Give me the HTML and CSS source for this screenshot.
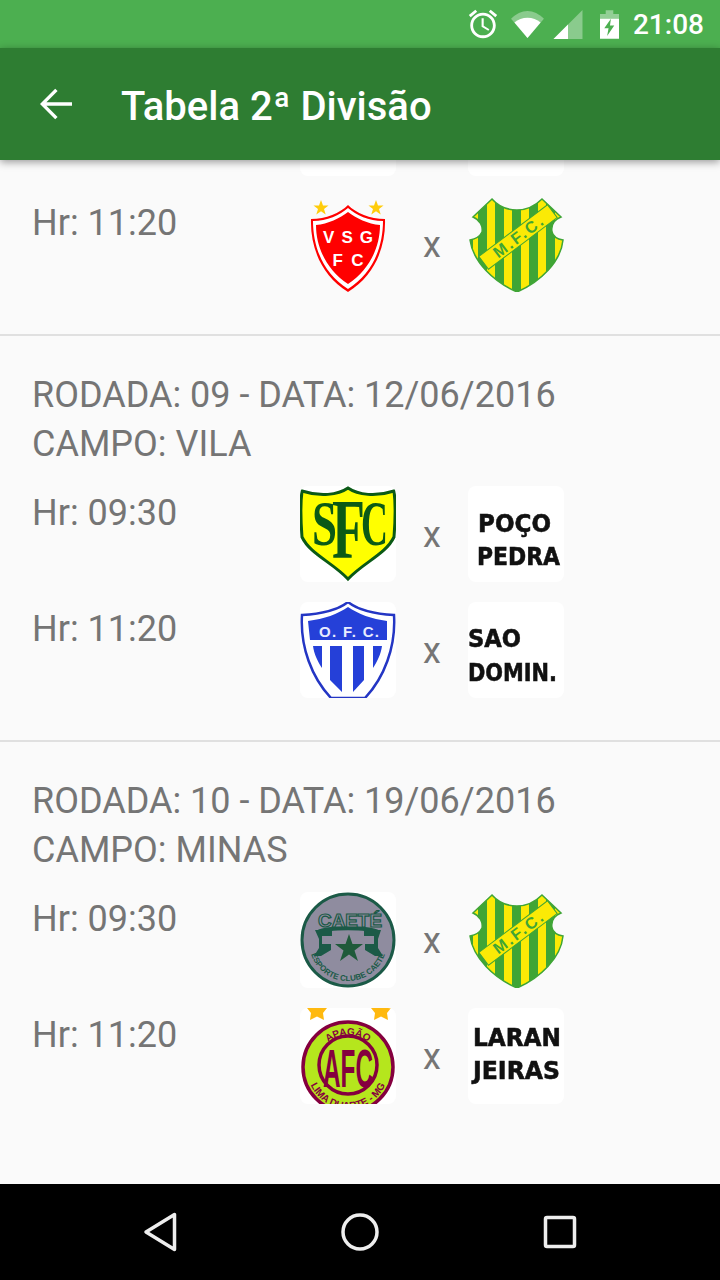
FILE: index.html
```html
<!DOCTYPE html>
<html lang="pt-br">
<head>
    <meta charset="UTF-8">
    <meta name="viewport" content="width=device-width, initial-scale=1.0">
    <title>Tabela 2ª Divisão</title>
    <link rel="stylesheet" href="styles.css">
</head>
<body>
    <svg class="defs" width="0" height="0">
        <defs>
            <clipPath id="mfcClip">
                <path d="M24 3 C31 11 41 14 49 14 C57 14 66 11 74 3 L93 21 C85 24 83 30 84 36 C85 40 89 43 95 44 C93 66 72 86 49 96 C26 86 5 66 2 44 C8 43 12 40 14 36 C15 30 12 24 5 21 Z"/>
            </clipPath>
            <symbol id="mfc" viewBox="0 0 96 96">
                <g clip-path="url(#mfcClip)">
                    <rect width="96" height="96" fill="#3fa535"/>
                    <path fill="#fbea06" d="M5 0h5v96H5zM19 0h8v96h-8zM36 0h8v96h-8zM53 0h8v96h-8zM70 0h8v96h-8zM87 0h8v96h-8z"/>
                </g>
                <path fill="none" stroke="#3fa535" stroke-width="1.500" d="M24 3 C31 11 41 14 49 14 C57 14 66 11 74 3 L93 21 C85 24 83 30 84 36 C85 40 89 43 95 44 C93 66 72 86 49 96 C26 86 5 66 2 44 C8 43 12 40 14 36 C15 30 12 24 5 21 Z"/>
                <g transform="rotate(-37 50 41)">
                    <rect x="7" y="33" width="86" height="16" fill="#fbea06" stroke="#3fa535" stroke-width="1"/>
                    <text class="crest-text" x="50" y="46.500" text-anchor="middle" font-size="16" fill="#3fa535" textLength="58" lengthAdjust="spacing">M.F.C.</text>
                </g>
            </symbol>
        </defs>
    </svg>

    <div class="tela">
        <div class="status-bar">
            <svg class="ic-alarme" viewBox="0 0 24 24"><path fill="#fff" d="M22 5.72l-4.6-3.86-1.29 1.53 4.6 3.86L22 5.72zM7.88 3.39L6.6 1.86 2 5.71l1.29 1.53 4.59-3.85zM12.5 8H11v6l4.75 2.85.75-1.23-4-2.37V8zM12 4c-4.97 0-9 4.03-9 9s4.03 9 9 9 9-4.03 9-9-4.03-9-9-9zm0 16c-3.87 0-7-3.13-7-7s3.13-7 7-7 7 3.13 7 7-3.13 7-7 7z"/></svg>
            <svg class="ic-wifi" viewBox="0 0 34 30">
                <path fill="#fff" fill-opacity=".35" d="M0 9 C5 4 11 1 17 1 C23 1 29 4 34 9 L17 29 Z"/>
                <path fill="#fff" d="M3.500 13 C7 9.500 12 8 17 8 C22 8 27 9.500 30.500 13 L17 29 Z"/>
            </svg>
            <svg class="ic-sinal" viewBox="0 0 30 30">
                <path fill="#fff" fill-opacity=".35" d="M0 30 L30 0 V30 Z"/>
                <path fill="#fff" d="M0 30 L15 15 V30 Z"/>
            </svg>
            <svg class="ic-bateria" viewBox="0 0 20 30">
                <path fill="#fff" fill-opacity=".4" d="M6 0h8v4h6v8H0V4h6z"/>
                <path fill="#fff" d="M0 9h20v21H0z"/>
                <path fill="#4caf50" d="M11.500 9 L4.500 19 H9 L7.500 27 L15 16 H10.500 Z"/>
            </svg>
            <span class="hora">21:08</span>
        </div>

        <header class="app-bar">
            <svg class="ic-voltar" viewBox="0 0 24 24"><path fill="#fff" d="M20 11.150H7.200l5.600-5.600L11.600 4.400 4 12l7.600 7.600 1.200-1.150-5.600-5.600H20z"/></svg>
            <h1 class="titulo">Tabela 2ª Divisão</h1>
        </header>

        <main class="conteudo">
            <div class="lista">
                <section class="rodada sem-cabecalho">
                    <div class="jogo">
                        <span class="hora-jogo"></span>
                        <div class="escudo branco"></div>
                        <span class="versus"></span>
                        <div class="escudo branco"></div>
                    </div>
                    <div class="jogo">
                        <span class="hora-jogo">Hr: 11:20</span>
                        <div class="escudo">
                            <svg viewBox="0 0 96 96">
                                <path fill="#ffcc0a" d="M21 4l2 5.500h5.500l-4.500 3.500 1.700 5.500-4.700-3.300-4.700 3.300 1.700-5.500-4.500-3.500H19zM76 4l2 5.500h5.500l-4.500 3.500 1.700 5.500-4.700-3.300-4.700 3.300 1.700-5.500-4.500-3.500H74z"/>
                                <path fill="#f00" d="M48 9 C56 17 70 23 85 23 C86 52 74 80 48 96 C22 80 10 52 11 23 C26 23 40 17 48 9 Z"/>
                                <path fill="#fff" d="M48 12 C56 19 69 25 83 25 C83 52 72 78 48 93 C24 78 13 52 13 25 C27 25 40 19 48 12 Z"/>
                                <path fill="#f00" d="M48 16 C56 22 68 28 80 29 C80 52 69 74 48 88 C27 74 16 52 16 29 C28 28 40 22 48 16 Z"/>
                                <text class="crest-text" x="48" y="47" text-anchor="middle" font-size="17" fill="#fff" textLength="50" lengthAdjust="spacing">VSG</text>
                                <text class="crest-text" x="48" y="70" text-anchor="middle" font-size="17" fill="#fff" textLength="31" lengthAdjust="spacing">FC</text>
                            </svg>
                        </div>
                        <span class="versus">x</span>
                        <div class="escudo"><svg viewBox="0 0 96 96"><use href="#mfc"/></svg></div>
                    </div>
                </section>

                <section class="rodada">
                    <p class="cabecalho">RODADA: 09 - DATA: 12/06/2016<br>CAMPO: VILA</p>
                    <div class="jogo">
                        <span class="hora-jogo">Hr: 09:30</span>
                        <div class="escudo branco">
                            <svg viewBox="0 0 96 96">
                                <path fill="#ff0" stroke="#0b5a16" stroke-width="3" d="M48 2 C58 9 76 11 94 5 C96 20 95 38 94 51 C86 68 64 76 48 93 C32 76 10 68 2 51 C1 38 0 20 2 5 C20 11 38 9 48 2 Z"/>
                                <text class="letra-serif" x="12" y="59" font-size="64" textLength="25" lengthAdjust="spacingAndGlyphs">S</text>
                                <text class="letra-serif" x="32" y="72" font-size="84" textLength="33" lengthAdjust="spacingAndGlyphs">F</text>
                                <text class="letra-serif" x="61" y="59" font-size="64" textLength="27" lengthAdjust="spacingAndGlyphs">C</text>
                            </svg>
                        </div>
                        <span class="versus">x</span>
                        <div class="escudo branco">
                            <svg class="borrado" viewBox="0 0 96 96">
                                <text class="nome-time" x="10" y="46" font-size="25" textLength="73" lengthAdjust="spacingAndGlyphs">POÇO</text>
                                <text class="nome-time" x="9" y="79" font-size="25" textLength="83" lengthAdjust="spacingAndGlyphs">PEDRA</text>
                            </svg>
                        </div>
                    </div>
                    <div class="jogo">
                        <span class="hora-jogo">Hr: 11:20</span>
                        <div class="escudo branco">
                            <svg viewBox="0 0 96 96">
                                <path fill="#fff" stroke="#2436c4" stroke-width="2.500" d="M48 0 C58 8 76 12 94 13 C96 45 84 76 65 96 H31 C12 76 0 45 2 13 C20 12 38 8 48 0 Z"/>
                                <path fill="#2540d8" d="M48 5 C58 12 72 17 87 19 V38 H10 L8 19 C24 17 38 12 48 5 Z"/>
                                <path fill="#2540d8" d="M13 44H22V66 C18 60 14 52 13 44ZM30 44H42V90 L30 78ZM53 44H64V78 L53 90ZM73 44H82 C81 52 77 60 73 66Z"/>
                                <text class="crest-text" x="49" y="35" text-anchor="middle" font-size="15" fill="#e8ecff" textLength="60" lengthAdjust="spacing">O. F. C.</text>
                            </svg>
                        </div>
                        <span class="versus">x</span>
                        <div class="escudo branco">
                            <svg class="borrado" viewBox="0 0 96 96">
                                <text class="nome-time" x="0" y="45" font-size="25" textLength="53" lengthAdjust="spacingAndGlyphs">SAO</text>
                                <text class="nome-time" x="0" y="79" font-size="25" textLength="89" lengthAdjust="spacingAndGlyphs">DOMIN.</text>
                            </svg>
                        </div>
                    </div>
                </section>

                <section class="rodada">
                    <p class="cabecalho">RODADA: 10 - DATA: 19/06/2016<br>CAMPO: MINAS</p>
                    <div class="jogo">
                        <span class="hora-jogo">Hr: 09:30</span>
                        <div class="escudo branco">
                            <svg viewBox="0 0 96 96">
                                <defs><path id="arcoCaete" d="M9 50 A39 39 0 0 0 87 50"/></defs>
                                <circle cx="48" cy="48" r="46" fill="#8f8c9f" stroke="#1b5a47" stroke-width="3"/>
                                <path fill="none" stroke="#1b5a47" stroke-width="4" d="M18 40 C28 35 68 35 78 40"/>
                                <path fill="#1b5a47" d="M15 38h17v6H22v8h9v6l-10 6H14l5-8v-9zM64 38h17l-3 9v9l5 8H75l-10-6v-6h9v-8H64z"/>
                                <path fill="#1f5a3a" d="M49 42l3.500 10h10.500l-8.500 6.500 3.500 10.500-9-6.500-9 6.500 3.500-10.500-8.500-6.500h10.500z"/>
                                <text class="crest-text caete" x="50" y="35" text-anchor="middle" font-size="19" textLength="64" lengthAdjust="spacingAndGlyphs">CAETÉ</text>
                                <text class="crest-text" font-size="8" fill="#1b5a47"><textPath href="#arcoCaete" startOffset="50%" text-anchor="middle">ESPORTE CLUBE CAETÉ</textPath></text>
                            </svg>
                        </div>
                        <span class="versus">x</span>
                        <div class="escudo"><svg viewBox="0 0 96 96"><use href="#mfc"/></svg></div>
                    </div>
                    <div class="jogo">
                        <span class="hora-jogo">Hr: 11:20</span>
                        <div class="escudo branco">
                            <svg viewBox="0 0 96 96">
                                <defs>
                                    <path id="arcoApagao" d="M17 58 A31 31 0 0 1 79 58"/>
                                    <path id="arcoLima" d="M7 60 A41 41 0 0 0 89 60"/>
                                </defs>
                                <path fill="#ffb90f" d="M7 0H27L23 5 24 12 17 8.500 10 12 11 5ZM71 0H91L87 5 88 12 81 8.500 74 12 75 5Z"/>
                                <circle cx="48" cy="59" r="45" fill="#b5e61d" stroke="#85003f" stroke-width="3.500"/>
                                <circle cx="48" cy="57" r="29" fill="none" stroke="#85003f" stroke-width="3.500"/>
                                <text class="crest-text" x="48" y="79" text-anchor="middle" font-size="54" fill="#85003f" textLength="50" lengthAdjust="spacingAndGlyphs">AFC</text>
                                <text class="crest-text" font-size="10" fill="#85003f"><textPath href="#arcoApagao" startOffset="50%" text-anchor="middle">APAGÃO</textPath></text>
                                <text class="crest-text" font-size="10" fill="#85003f"><textPath href="#arcoLima" startOffset="50%" text-anchor="middle">LIMA DUARTE - MG</textPath></text>
                            </svg>
                        </div>
                        <span class="versus">x</span>
                        <div class="escudo branco">
                            <svg class="borrado" viewBox="0 0 96 96">
                                <text class="nome-time" x="5" y="38" font-size="25" textLength="88" lengthAdjust="spacingAndGlyphs">LARAN</text>
                                <text class="nome-time" x="5" y="71" font-size="25" textLength="87" lengthAdjust="spacingAndGlyphs">JEIRAS</text>
                            </svg>
                        </div>
                    </div>
                </section>
            </div>
        </main>

        <nav class="nav-bar">
            <svg class="ic-nav" viewBox="0 0 48 48"><path fill="none" stroke="#eee" stroke-width="3.500" stroke-linejoin="round" d="M38.500 6.500V41.500L10 24Z"/></svg>
            <svg class="ic-nav" viewBox="0 0 48 48"><circle cx="24" cy="24" r="17" fill="none" stroke="#eee" stroke-width="3.500"/></svg>
            <svg class="ic-nav" viewBox="0 0 48 48"><rect x="9.500" y="9.500" width="29" height="29" rx="1.500" fill="none" stroke="#eee" stroke-width="3.500"/></svg>
        </nav>
    </div>
</body>
</html>
```

FILE: styles.css
```css
body {
    margin: 0;
    font-family: Roboto, sans-serif;
    background-color: #fafafa;
}
.defs {
    display: block;
    height: 0;
}
.tela {
    width: 720px;
    height: 1280px;
    display: flex;
    flex-direction: column;
    overflow: hidden;
}
.status-bar {
    height: 48px;
    flex: none;
    background-color: #4caf50;
    display: flex;
    align-items: center;
    padding-right: 16px;
    justify-content: flex-end;
    color: white;
}
.ic-alarme {
    width: 34px;
    height: 34px;
    margin-right: 11px;
}
.ic-wifi {
    width: 33px;
    height: 29px;
    margin-right: 9px;
}
.ic-sinal {
    width: 30px;
    height: 29px;
    margin-right: 17px;
}
.ic-bateria {
    width: 19px;
    height: 29px;
    margin-right: 14px;
}
.hora {
    font-size: 28px;
    font-weight: 500;
}
.app-bar {
    height: 112px;
    flex: none;
    background-color: #2e7d32;
    display: flex;
    align-items: center;
    position: relative;
    z-index: 2;
    box-shadow: 0 2px 8px rgba(0,0,0,0.4);
}
.ic-voltar {
    width: 48px;
    height: 48px;
    margin-left: 32px;
}
.titulo {
    margin: 4px 0 0 41px;
    font-size: 40px;
    font-weight: 500;
    color: white;
}
.conteudo {
    flex: 1;
    overflow: hidden;
}
.lista {
    margin-top: -80px;
}
.rodada {
    padding: 35px 0 42px 32px;
    border-bottom: 2px solid #e0e0e0;
}
.rodada:last-child {
    border-bottom: none;
}
.sem-cabecalho {
    padding-top: 0;
}
.cabecalho {
    margin: 0 0 17px 0;
    font-size: 36px;
    line-height: 49px;
    color: #757575;
}
.jogo {
    display: flex;
    height: 96px;
    margin-bottom: 20px;
}
.jogo:last-child {
    margin-bottom: 0;
}
.hora-jogo {
    width: 268px;
    font-size: 36px;
    line-height: 54px;
    color: #757575;
}
.escudo {
    width: 96px;
    height: 96px;
    border-radius: 8px;
    overflow: hidden;
}
.escudo svg {
    display: block;
    width: 96px;
    height: 96px;
}
.branco {
    background-color: white;
}
.versus {
    width: 72px;
    text-align: center;
    font-size: 36px;
    line-height: 98px;
    color: #757575;
}
.crest-text {
    font-family: "Liberation Sans", sans-serif;
    font-weight: bold;
}
.caete {
    fill: #8f8c9f;
    stroke: #1b5a47;
    stroke-width: 1.2px;
}
.letra-serif {
    font-family: "Liberation Serif", serif;
    font-weight: bold;
    fill: #0b5a16;
}
.nome-time {
    font-family: "DejaVu Sans", sans-serif;
    font-weight: bold;
    fill: #111;
    stroke: #111;
    stroke-width: 0.6px;
}
.borrado {
    filter: blur(0.4px);
}
.nav-bar {
    height: 96px;
    flex: none;
    background-color: black;
    display: flex;
    justify-content: space-between;
    align-items: center;
    padding: 0 136px;
}
.ic-nav {
    width: 48px;
    height: 48px;
}
```
